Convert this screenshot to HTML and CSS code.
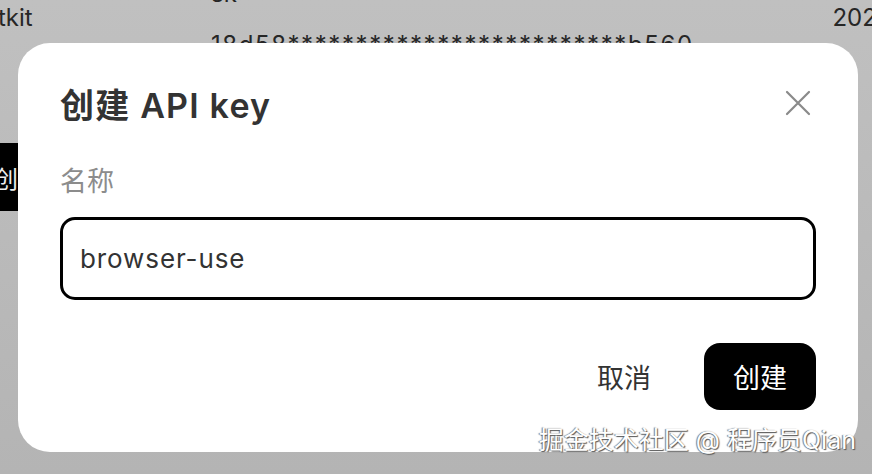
FILE: index.html
```html
<!DOCTYPE html>
<html lang="zh-CN">
<head>
    <meta charset="UTF-8">
    <meta name="viewport" content="width=device-width, initial-scale=1.0">
    <title>创建 API key</title>
    <link rel="stylesheet" href="styles.css">
</head>
<body>
    <!-- Page behind the modal -->
    <div class="page">
        <div class="key-row">
            <div class="cell cell-name">tkit</div>
            <div class="cell cell-key">
                <span class="key-prefix">sk</span>
                <span class="key-value">18d58*************************b560</span>
            </div>
            <div class="cell cell-date">2024</div>
        </div>
        <div class="page-actions">
            <button class="page-button">创建 API key</button>
        </div>
    </div>

    <!-- Create key modal -->
    <div class="dialog">
        <div class="dialog-head">
            <h2 class="dialog-title">创建 API key</h2>
            <button class="close-button" aria-label="关闭">
                <svg width="26" height="26" viewBox="0 0 26 26">
                    <path d="M2 2 L24 24 M24 2 L2 24" stroke="#8a8a8a" stroke-width="2.2" stroke-linecap="round"/>
                </svg>
            </button>
        </div>
        <label class="field-label" for="keyName">名称</label>
        <div class="field">
            <input id="keyName" class="field-input" type="text" value="browser-use">
        </div>
        <div class="dialog-footer">
            <button class="button-text">取消</button>
            <button class="button-primary">创建</button>
        </div>
    </div>

    <div class="watermark">掘金技术社区 @ 程序员Qian</div>
</body>
</html>
```

FILE: styles.css
```css
body {
    margin: 0;
    width: 872px;
    height: 474px;
    overflow: hidden;
    font-family: Inter, "Noto Sans CJK SC", sans-serif;
    color: #333;
    background: linear-gradient(#c0c0c0, #b4b4b4);
    position: relative;
}
.page {
    color: #262626;
}
.key-row {
    display: flex;
    font-size: 24px;
    line-height: 30px;
}
.cell-name {
    width: 213px;
    margin-top: 3px;
    margin-left: -2px;
}
.cell-key {
    display: flex;
    flex-direction: column;
    margin-top: -21px;
}
.key-value {
    margin-top: 21px;
    letter-spacing: 1.6px;
}
.cell-date {
    margin-left: auto;
    margin-right: -20px;
    margin-top: 3px;
}
.page-actions {
    margin-top: 83px;
    margin-left: -8px;
}
.page-button {
    background: #000;
    color: #eee;
    border: none;
    height: 68px;
    padding: 0 0 0 2px;
    font-family: inherit;
    font-size: 24px;
}
.dialog {
    position: absolute;
    left: 18px;
    top: 43px;
    width: 840px;
    height: 409px;
    box-sizing: border-box;
    padding: 36px 42px 0;
    background: #fff;
    border-radius: 32px;
}
.dialog-head {
    display: flex;
    align-items: center;
    justify-content: space-between;
    height: 48px;
}
.dialog-title {
    margin: 0;
    font-size: 34px;
    font-weight: 600;
    letter-spacing: 1.2px;
    color: #333;
}
.close-button {
    background: none;
    border: none;
    padding: 0;
    margin-right: 5px;
    display: flex;
}
.field-label {
    display: block;
    margin-top: 37px;
    font-size: 27px;
    line-height: 36px;
    color: #8c8c8c;
}
.field {
    margin-top: 17px;
}
.field-input {
    width: 100%;
    height: 83px;
    box-sizing: border-box;
    border: 3px solid #000;
    border-radius: 15px;
    padding: 0 17px;
    font-family: inherit;
    font-size: 26px;
    letter-spacing: 0.9px;
    color: #333;
    outline: none;
}
.dialog-footer {
    display: flex;
    justify-content: flex-end;
    align-items: center;
    gap: 53px;
    margin-top: 43px;
}
.button-text {
    background: none;
    border: none;
    padding: 0;
    font-family: inherit;
    font-size: 27px;
    color: #333;
}
.button-primary {
    background: #000;
    color: #fff;
    border: none;
    border-radius: 16px;
    width: 112px;
    height: 67px;
    font-family: inherit;
    font-size: 27px;
}
.watermark {
    position: absolute;
    right: 16px;
    bottom: 20px;
    font-size: 25px;
    line-height: 28px;
    letter-spacing: 0;
    color: #fff;
    text-shadow: 1px 1px 1px #555, -1px 0 1px #777;
}
```
